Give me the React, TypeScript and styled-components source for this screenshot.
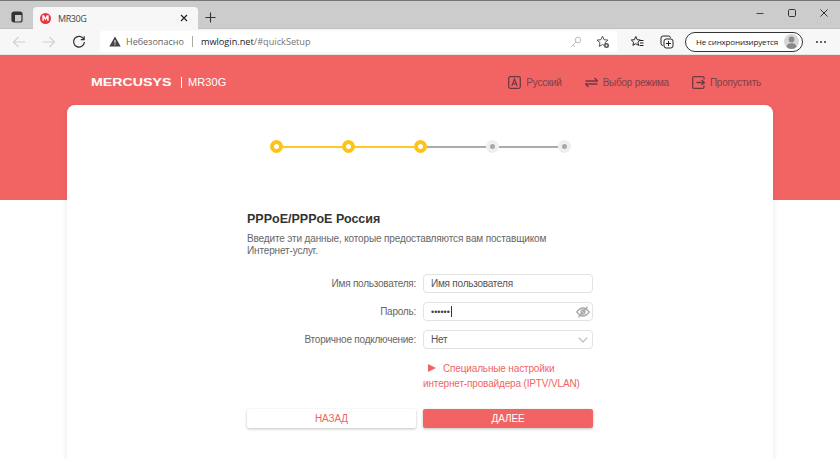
import React from 'react';
import styled, { createGlobalStyle } from 'styled-components';

const GlobalStyle = createGlobalStyle`
  html, body {
    margin: 0;
    padding: 0;
    width: 840px;
    height: 459px;
    overflow: hidden;
    background: #fff;
    font-family: 'Liberation Sans', Arial, sans-serif;
  }
`;

const steps = [true, true, true, false, false];

const App: React.FC = () => {
  return (
    <Page>
      <GlobalStyle />
      <TabStrip>
        <TabActions>
          <svg width="12" height="12" viewBox="0 0 12 12" fill="none">
            <rect x="1" y="1" width="10" height="10" rx="2" stroke="#333" strokeWidth="1.2" />
            <path d="M1 4h10V2.500L10 1H2L1 2.500zM1 4h3v7H2.500L1 10z" fill="#333" />
          </svg>
        </TabActions>
        <Tab>
          <Favicon>
            <svg viewBox="0 0 9 8">
              <path d="M0.300 7.700V0.300H2.500L4.500 3.600L6.500 0.300H8.700V7.700H6.700V3.800L4.500 7.200L2.300 3.800V7.700z" fill="#fff" />
            </svg>
          </Favicon>
          <TabTitle>MR30G</TabTitle>
          <svg width="8" height="8" viewBox="0 0 8 8">
            <path d="M1 1l6 6M7 1l-6 6" stroke="#222" strokeWidth="1.200" />
          </svg>
        </Tab>
        <NewTab>
          <svg width="11" height="11" viewBox="0 0 11 11">
            <path d="M5.500 0.500v10M0.500 5.500h10" stroke="#333" strokeWidth="1.100" />
          </svg>
        </NewTab>
        <WindowControls>
          <svg width="10" height="10" viewBox="0 0 10 10">
            <path d="M1.500 5.500h7" stroke="#444" strokeWidth="1" />
          </svg>
          <svg width="10" height="10" viewBox="0 0 10 10" fill="none">
            <rect x="1.500" y="1.500" width="7" height="7" rx="1.200" stroke="#333" strokeWidth="1" />
          </svg>
          <svg width="10" height="10" viewBox="0 0 10 10">
            <path d="M1.500 1.500l7 7M8.500 1.500l-7 7" stroke="#333" strokeWidth="1" />
          </svg>
        </WindowControls>
      </TabStrip>

      <Toolbar>
        <NavIcons>
          <svg width="14" height="14" viewBox="0 0 14 14" fill="none" stroke="#d0d0d0" strokeWidth="1.100">
            <path d="M13 7H1.500M6.500 2L1.500 7l5 5" />
          </svg>
          <svg width="14" height="14" viewBox="0 0 14 14" fill="none" stroke="#d0d0d0" strokeWidth="1.100">
            <path d="M1 7h11.500M7.500 2l5 5-5 5" />
          </svg>
          <svg width="14" height="14" viewBox="0 0 14 14" fill="none" stroke="#333" strokeWidth="1.200">
            <path d="M11.800 4.200A5.400 5.400 0 1 0 12.400 7M12.200 1.200v3.400H8.800" />
          </svg>
        </NavIcons>
        <AddressBar>
          <svg width="12" height="11" viewBox="0 0 12 11">
            <path d="M6 0.500L11.700 10.500H0.300z" fill="#444" />
            <path d="M6 4v3.400M6 8.200v1" stroke="#fff" strokeWidth="1" />
          </svg>
          <Insecure>Небезопасно</Insecure>
          <AddressDivider />
          <Url>
            <b>mwlogin.net</b>/#quickSetup
          </Url>
          <AddressTools>
            <svg width="12" height="12" viewBox="0 0 12 12" fill="none" stroke="#bbb" strokeWidth="1">
              <circle cx="8" cy="4" r="2.800" />
              <path d="M6 6l-4.500 4.500M3 9l1.500 1.500" />
            </svg>
            <svg width="14" height="14" viewBox="0 0 14 14" fill="none">
              <path d="M6.500 1.200l1.600 3.500 3.800.4-2.900 2.600.8 3.700-3.300-1.900-3.300 1.900.8-3.700L1.100 5.100l3.800-.4z" stroke="#555" strokeWidth="1" />
              <circle cx="10.500" cy="10.500" r="2.500" fill="#555" />
              <circle cx="10.500" cy="10.500" r="0.900" fill="#fff" />
            </svg>
          </AddressTools>
        </AddressBar>
        <BrowserIcons>
          <svg width="14" height="14" viewBox="0 0 14 14" fill="none" stroke="#222" strokeWidth="1">
            <path d="M5.800 1.500l1.400 3.200 3 .3-2.300 2.200.7 3.200-2.800-1.700-2.900 1.700.7-3.200L1.300 5l3.100-.3z" />
            <path d="M10 5.500h3.500M10 8h3.500M9.500 10.500h4" />
          </svg>
          <svg width="14" height="14" viewBox="0 0 14 14" fill="none" stroke="#222" strokeWidth="1">
            <rect x="4" y="4" width="9" height="9" rx="2.200" />
            <path d="M2.800 10.500A2 2 0 0 1 1 8.500V3.200A2.200 2.200 0 0 1 3.200 1h5.300A2 2 0 0 1 10.500 2.800M8.500 6v5M6 8.500h5" />
          </svg>
        </BrowserIcons>
        <SyncPill>
          <SyncText>Не синхронизируется</SyncText>
          <Avatar>
            <svg viewBox="0 0 18 18">
              <circle cx="9" cy="6.500" r="3.400" fill="#8a8a8a" />
              <path d="M2.500 18c0-5 2.500-7 6.500-7s6.500 2 6.500 7z" fill="#8a8a8a" />
            </svg>
          </Avatar>
        </SyncPill>
        <MoreDots>
          <i />
          <i />
          <i />
        </MoreDots>
      </Toolbar>

      <Hero>
        <HeroBar>
          <Brand>
            <Logo>MERCUSYS</Logo>
            <BrandDivider />
            <Model>MR30G</Model>
          </Brand>
          <HeroLinks>
            <HeroLink>
              <svg width="13" height="13" viewBox="0 0 13 13" fill="none">
                <rect x="0.700" y="0.700" width="11.600" height="11.600" rx="1.500" stroke="#6e3a42" strokeWidth="1.300" />
                <path d="M3.800 10L6.500 3l2.700 7M4.700 7.800h3.600" stroke="#6e3a42" strokeWidth="1.200" />
              </svg>
              Русский
            </HeroLink>
            <HeroLink>
              <svg width="13" height="11" viewBox="0 0 13 11" fill="none" stroke="#6e3a42" strokeWidth="1.300">
                <path d="M0.500 4h12L9.500 1M12.500 7H.5l3 3" />
              </svg>
              Выбор режима
            </HeroLink>
            <HeroLink>
              <svg width="13" height="13" viewBox="0 0 13 13" fill="none" stroke="#6e3a42" strokeWidth="1.300">
                <path d="M12 3.500V2a1.300 1.300 0 0 0-1.300-1.300H2A1.300 1.300 0 0 0 .7 2v9A1.300 1.300 0 0 0 2 12.300h8.700A1.300 1.300 0 0 0 12 11V9.500M4.500 6.500h8M9.500 4l3 2.500-3 2.500" />
              </svg>
              Пропустить
            </HeroLink>
          </HeroLinks>
        </HeroBar>
      </Hero>

      <Card>
        <Stepper>
          {steps.map((done, i) => (
            <React.Fragment key={i}>
              {i > 0 && <StepLine $done={done} />}
              <StepDot $done={done} />
            </React.Fragment>
          ))}
        </Stepper>

        <Form>
          <Title>PPPoE/PPPoE Россия</Title>
          <Description>
            Введите эти данные, которые предоставляются вам поставщиком Интернет-услуг.
          </Description>

          <Fields>
            <Label>Имя пользователя:</Label>
            <Field>Имя пользователя</Field>

            <Label>Пароль:</Label>
            <Field>
              <Dots>••••••</Dots>
              <Caret />
              <FieldIcon>
                <svg width="14" height="12" viewBox="0 0 14 12" fill="none" stroke="#a8a8a8" strokeWidth="1.300">
                  <path d="M0.800 6C3 3 5 2 7 2s4 1 6.200 4C11 9 9 10 7 10S3 9 .8 6z" />
                  <circle cx="7" cy="6" r="2" />
                  <path d="M11.500.8L2.500 11.200" />
                </svg>
              </FieldIcon>
            </Field>

            <Label>Вторичное подключение:</Label>
            <Field>
              Нет
              <FieldIcon>
                <svg width="10" height="6" viewBox="0 0 10 6" fill="none" stroke="#b5b5b5" strokeWidth="1.100">
                  <path d="M.7.700L5 5 9.300.7" />
                </svg>
              </FieldIcon>
            </Field>

            <span />
            <ProviderLink>
              <Arrow />
              Специальные настройки
              <br />
              интернет-провайдера (IPTV/VLAN)
            </ProviderLink>
          </Fields>

          <Buttons>
            <Button>НАЗАД</Button>
            <Button $primary>ДАЛЕЕ</Button>
          </Buttons>
        </Form>
      </Card>
    </Page>
  );
};

export default App;

const Page = styled.div`
  width: 840px;
  height: 459px;
  overflow: hidden;
  display: flex;
  flex-direction: column;
  background: #fff;
`;

const TabStrip = styled.div`
  height: 27px;
  flex: none;
  display: flex;
  align-items: flex-end;
  background: #cccccc;
  border-top: 1px solid #777;
  border-bottom: 1px solid #c0c0c0;
  box-sizing: content-box;
`;

const TabActions = styled.div`
  width: 33px;
  height: 22px;
  display: flex;
  align-items: center;
  justify-content: center;
`;

const Tab = styled.div`
  width: 165px;
  height: 22px;
  margin-bottom: -1px;
  padding: 0 10px 0 7px;
  box-sizing: border-box;
  display: flex;
  align-items: center;
  background: #f7f7f7;
  border-radius: 4px 4px 0 0;
`;

const Favicon = styled.div`
  width: 11px;
  height: 11px;
  border-radius: 50%;
  background: #e8343d;
  display: flex;
  align-items: center;
  justify-content: center;
  margin-right: 7px;

  > svg {
    width: 7px;
    height: 6px;
  }
`;

const TabTitle = styled.span`
  flex: 1;
  font-family: 'Open Sans', sans-serif;
  font-size: 9px;
  letter-spacing: -0.4px;
  color: #444;
`;

const NewTab = styled.div`
  width: 24px;
  height: 22px;
  display: flex;
  align-items: center;
  justify-content: center;
`;

const WindowControls = styled.div`
  margin-left: auto;
  width: 85px;
  height: 27px;
  padding-bottom: 3px;
  box-sizing: border-box;
  display: flex;
  align-items: center;
  gap: 22px;
`;

const Toolbar = styled.div`
  height: 25px;
  flex: none;
  display: flex;
  align-items: center;
  background: #f7f7f7;
  border-bottom: 1px solid #e6e6e6;
`;

const NavIcons = styled.div`
  width: 100px;
  padding-left: 12px;
  box-sizing: border-box;
  display: flex;
  gap: 16px;
`;

const AddressBar = styled.div`
  width: 517px;
  height: 21px;
  padding: 0 7px 0 9px;
  box-sizing: border-box;
  display: flex;
  align-items: center;
  background: #fff;
  border-radius: 3px;
`;

const Insecure = styled.span`
  margin-left: 5px;
  font-family: 'Open Sans', sans-serif;
  font-size: 9px;
  color: #666;
`;

const AddressDivider = styled.div`
  width: 1px;
  height: 11px;
  margin: 0 8px;
  background: #aaa;
`;

const Url = styled.span`
  font-family: 'Open Sans', sans-serif;
  font-size: 9.2px;
  color: #777;

  > b {
    font-weight: 400;
    color: #222;
  }
`;

const AddressTools = styled.div`
  margin-left: auto;
  display: flex;
  align-items: center;
  gap: 14px;
`;

const BrowserIcons = styled.div`
  width: 68px;
  padding-left: 13px;
  box-sizing: border-box;
  display: flex;
  gap: 16px;
`;

const SyncPill = styled.div`
  width: 118px;
  height: 20px;
  padding: 0 3px 0 10px;
  box-sizing: border-box;
  display: flex;
  align-items: center;
  justify-content: space-between;
  border: 1px solid #333;
  border-radius: 10px;
  background: #fff;
`;

const SyncText = styled.span`
  font-family: 'Open Sans', sans-serif;
  font-size: 8px;
  letter-spacing: -0.15px;
  color: #222;
`;

const Avatar = styled.div`
  width: 15px;
  height: 15px;
  border-radius: 50%;
  overflow: hidden;
  background: #d6d6d6;

  > svg {
    display: block;
    width: 15px;
    height: 15px;
  }
`;

const MoreDots = styled.div`
  margin-left: 13px;
  display: flex;
  gap: 2px;

  > i {
    width: 2px;
    height: 2px;
    border-radius: 50%;
    background: #333;
  }
`;

const Hero = styled.div`
  height: 145px;
  flex: none;
  background: #f26464;
`;

const HeroBar = styled.div`
  height: 54px;
  padding: 0 79px 0 91px;
  display: flex;
  align-items: center;
  justify-content: space-between;
`;

const Brand = styled.div`
  display: flex;
  align-items: center;
  color: #fff;
`;

const Logo = styled.span`
  width: 90px;
  font-size: 10px;
  font-weight: 700;
  transform: scaleX(1.42);
  transform-origin: left center;
`;

const BrandDivider = styled.div`
  width: 1px;
  height: 11px;
  margin-right: 6px;
  background: #fff;
`;

const Model = styled.span`
  font-size: 11px;
  letter-spacing: 0.1px;
`;

const HeroLinks = styled.div`
  display: flex;
  gap: 23px;
`;

const HeroLink = styled.div`
  display: flex;
  align-items: center;
  gap: 5px;
  font-size: 10px;
  letter-spacing: -0.25px;
  color: #7d4149;
`;

const Card = styled.div`
  flex: none;
  width: 706px;
  height: 400px;
  margin: -95px 0 0 67px;
  padding-top: 35px;
  box-sizing: border-box;
  background: #fff;
  border-radius: 8px;
  box-shadow: 0 1px 6px rgba(0, 0, 0, 0.1);
`;

const Stepper = styled.div`
  width: 301px;
  margin-left: 203px;
  display: flex;
  align-items: center;
`;

const StepDot = styled.div<{ $done: boolean }>`
  flex: none;
  box-sizing: border-box;
  width: 13px;
  height: 13px;
  border-radius: 50%;
  background: ${(p) => (p.$done ? '#fff' : '#a9a9a9')};
  border: ${(p) => (p.$done ? '4px solid #fcc419' : '4px solid #efefef')};
`;

const StepLine = styled.div<{ $done: boolean }>`
  flex: 1;
  height: 2px;
  background: ${(p) => (p.$done ? '#fcc82c' : '#acacb0')};
`;

const Form = styled.div`
  width: 346px;
  margin: 59px 0 0 180px;
`;

const Title = styled.h2`
  margin: 0;
  font-size: 12.5px;
  line-height: 14px;
  font-weight: 700;
  color: #333;
`;

const Description = styled.p`
  margin: 7px 0 0;
  width: 320px;
  font-size: 10px;
  letter-spacing: -0.14px;
  line-height: 12px;
  color: #666;
`;

const Fields = styled.div`
  margin-top: 17px;
  display: grid;
  grid-template-columns: 169px 170px;
  column-gap: 7px;
  row-gap: 9px;
  align-items: center;
`;

const Label = styled.div`
  font-size: 10px;
  letter-spacing: -0.23px;
  color: #666;
  text-align: right;
`;

const Field = styled.div`
  position: relative;
  height: 19px;
  padding: 0 7px;
  box-sizing: border-box;
  display: flex;
  align-items: center;
  font-size: 10px;
  letter-spacing: -0.23px;
  color: #555;
  background: #fff;
  border: 1px solid #e3e3e3;
  border-radius: 4px;
`;

const Dots = styled.span`
  font-size: 9px;
  letter-spacing: 0;
  color: #444;
`;

const Caret = styled.span`
  width: 1px;
  height: 11px;
  margin-left: 1px;
  background: #333;
`;

const FieldIcon = styled.span`
  position: absolute;
  right: 2px;
  top: 0;
  bottom: 0;
  width: 15px;
  display: flex;
  align-items: center;
  justify-content: center;
`;

const ProviderLink = styled.div`
  margin-top: 3px;
  font-size: 10px;
  letter-spacing: -0.15px;
  line-height: 15px;
  color: #f26464;
`;

const Arrow = styled.span`
  display: inline-block;
  width: 0;
  height: 0;
  margin: 0 7px 0 5px;
  border-left: 8px solid #f26464;
  border-top: 4.5px solid transparent;
  border-bottom: 4.5px solid transparent;
`;

const Buttons = styled.div`
  margin-top: 18px;
  display: grid;
  grid-template-columns: 169px 170px;
  column-gap: 7px;
`;

const Button = styled.div<{ $primary?: boolean }>`
  height: 19px;
  display: flex;
  align-items: center;
  justify-content: center;
  font-size: 10px;
  letter-spacing: -0.1px;
  border-radius: 2px;
  color: ${(p) => (p.$primary ? '#fff' : '#f26464')};
  background: ${(p) => (p.$primary ? '#f26464' : '#fff')};
  box-shadow: 0 1px 3px rgba(0, 0, 0, 0.25);
`;
